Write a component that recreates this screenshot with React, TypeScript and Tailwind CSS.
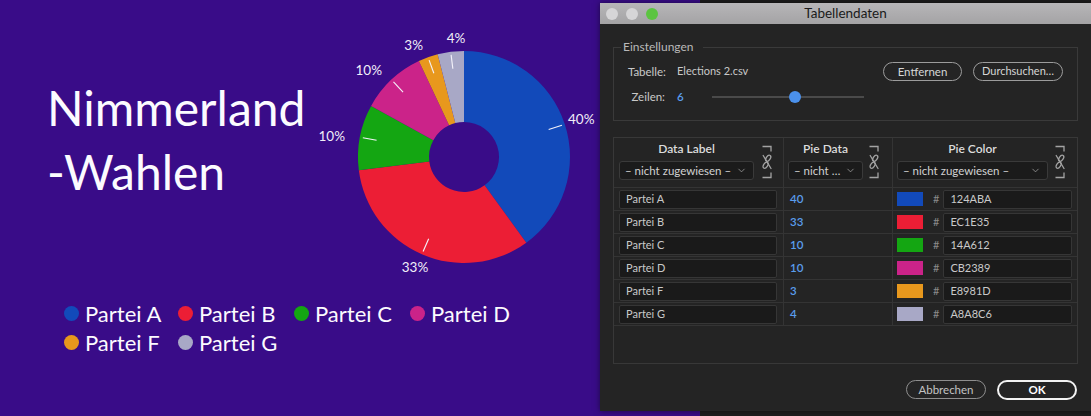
import React from 'react';
import { ChevronDown } from 'lucide-react';

const data = [
  { label: 'Partei A', value: 40, color: '#124ABA', hex: '124ABA' },
  { label: 'Partei B', value: 33, color: '#EC1E35', hex: 'EC1E35' },
  { label: 'Partei C', value: 10, color: '#14A612', hex: '14A612' },
  { label: 'Partei D', value: 10, color: '#CB2389', hex: 'CB2389' },
  { label: 'Partei F', value: 3, color: '#E8981D', hex: 'E8981D' },
  { label: 'Partei G', value: 4, color: '#A8A8C6', hex: 'A8A8C6' },
];

const labels = [
  { t: '40%', x: 568, y: 124, a: 'start' },
  { t: '33%', x: 415, y: 272, a: 'middle' },
  { t: '10%', x: 345, y: 141, a: 'end' },
  { t: '10%', x: 382, y: 75, a: 'end' },
  { t: '3%', x: 423, y: 50, a: 'end' },
  { t: '4%', x: 456, y: 43, a: 'middle' },
];

const CX = 464;
const CY = 157;
const R1 = 106;
const R0 = 35;

function pt(r: number, a: number): [number, number] {
  const rad = (a * Math.PI) / 180;
  return [CX + r * Math.sin(rad), CY - r * Math.cos(rad)];
}

function slicePath(a0: number, a1: number) {
  const large = a1 - a0 > 180 ? 1 : 0;
  const [x0, y0] = pt(R1, a0);
  const [x1, y1] = pt(R1, a1);
  const [x2, y2] = pt(R0, a1);
  const [x3, y3] = pt(R0, a0);
  return `M${x0} ${y0} A${R1} ${R1} 0 ${large} 1 ${x1} ${y1} L${x2} ${y2} A${R0} ${R0} 0 ${large} 0 ${x3} ${y3} Z`;
}

function Donut() {
  let acc = 0;
  const parts = data.map((d) => {
    const a0 = (acc / 100) * 360;
    acc += d.value;
    const a1 = (acc / 100) * 360;
    const mid = (a0 + a1) / 2;
    const [lx0, ly0] = pt(89, mid);
    const [lx1, ly1] = pt(103, mid);
    return { d, a0, a1, lx0, ly0, lx1, ly1 };
  });
  return (
    <svg className="mt-[20px] shrink-0" width={290} height={270} viewBox="310 20 290 270">
      {parts.map((p, i) => (
        <path key={i} d={slicePath(p.a0, p.a1)} fill={p.d.color} />
      ))}
      {parts.map((p, i) => (
        <line key={'l' + i} x1={p.lx0} y1={p.ly0} x2={p.lx1} y2={p.ly1} stroke="#f4f2fa" strokeWidth={1.1} />
      ))}
      {labels.map((l, i) => (
        <text
          key={'t' + i}
          x={l.x}
          y={l.y}
          textAnchor={l.a as 'start' | 'middle' | 'end'}
          fill="#f1eff8"
          fontSize={13.5}
          fontFamily="Lato, 'Open Sans', sans-serif"
        >
          {l.t}
        </text>
      ))}
    </svg>
  );
}

function LinkIcon() {
  return (
    <svg width={12} height={34} viewBox="0 0 12 34" className="shrink-0" fill="none" stroke="#a3a3a3" strokeWidth={1.3} strokeLinecap="round">
      <path d="M1.5 1.5 H10 V6.5" strokeLinecap="butt" />
      <path d="M1.5 32.5 H10 V27.5" strokeLinecap="butt" />
      <ellipse cx={7.2} cy={13.2} rx={2} ry={3.4} transform="rotate(35 7.2 13.2)" />
      <ellipse cx={4.6} cy={20.2} rx={2} ry={3.4} transform="rotate(35 4.6 20.2)" />
      <path d="M2.2 10.5 L10 23.5" />
    </svg>
  );
}

function Select({ text, w }: { text: string; w: string }) {
  return (
    <div className={`flex h-[19px] ${w} items-center justify-between rounded-[3px] border border-[#3a3a3a] bg-[#1b1b1b] pl-[5px] pr-[6px] text-[11.5px] text-[#d2d2d2]`}>
      <span className="whitespace-nowrap">{text}</span>
      <ChevronDown size={11} strokeWidth={1.6} color="#a9a9a9" />
    </div>
  );
}

function HeaderCell({
  title,
  select,
  selW,
  pl,
  gap,
  border,
}: {
  title: string;
  select: string;
  selW: string;
  pl: string;
  gap: string;
  border: boolean;
}) {
  return (
    <div className={`flex items-start ${pl} pt-[4px] pb-[7px] ${border ? 'border-r border-[#343434]' : ''}`}>
      <div className="flex flex-col">
        <div className="h-[14px] text-center text-[12px] leading-[14px] font-semibold text-[#dcdcdc]">{title}</div>
        <div className="mt-[5px]">
          <Select text={select} w={selW} />
        </div>
      </div>
      <div className={`mt-[3px] ${gap}`}>
        <LinkIcon />
      </div>
    </div>
  );
}

export default function App() {
  return (
    <div
      className="relative h-[416px] w-[1091px] overflow-hidden bg-[#390C88]"
      style={{ fontFamily: "Lato, 'Open Sans', sans-serif" }}
    >
      {/* Slide */}
      <div className="flex h-[416px] w-[600px] flex-col text-[#fcfbff]">
        <div className="flex">
          <h1 className="ml-[47px] mt-[76px] w-[263px] shrink-0 text-[48px] leading-[64px] font-normal">
            Nimmerland
            <br />
            -Wahlen
          </h1>
          <Donut />
        </div>
        <div className="ml-[64px] mt-[9px] grid grid-cols-[114px_116px_116px_auto] text-[22px] leading-[29px]">
          {data.map((d) => (
            <div key={d.label} className="flex items-center gap-[6px]">
              <span className="h-[15px] w-[15px] rounded-full" style={{ backgroundColor: d.color }} />
              <span>{d.label}</span>
            </div>
          ))}
        </div>
      </div>

      {/* Window behind */}
      <div className="absolute top-0 right-0 bottom-0 left-[700px] bg-[#1d1d1d]" />

      {/* Dialog */}
      <div className="absolute top-[3px] left-[600px] flex h-[408px] w-[491px] flex-col bg-[#242424] text-[11px] text-[#c9c9c9] shadow-[0_0_6px_rgba(0,0,0,0.5)]">
        {/* Title bar */}
        <div className="relative flex h-[21px] shrink-0 items-center gap-[8px] bg-linear-to-b from-[#b7b6b8] to-[#a4a3a5] pl-[6px]">
          <span className="h-[12px] w-[12px] rounded-full bg-[#d6d5d7]" />
          <span className="h-[12px] w-[12px] rounded-full bg-[#d6d5d7]" />
          <span className="h-[12px] w-[12px] rounded-full bg-[#5cc441]" />
          <div className="absolute inset-0 flex items-center justify-center text-[13.5px] text-[#1a1a1a]">
            Tabellendaten
          </div>
        </div>

        {/* Einstellungen */}
        <div className="relative mx-[13px] mt-[23px] flex h-[74px] flex-col gap-[6px] border border-[#3a3a3a] pt-[14px] pr-[14px] text-[11.5px]">
          <span className="absolute -top-[8px] left-[7px] bg-[#242424] pr-[9px] pl-[2px] text-[12px] leading-[14px] text-[#b9b9b9]">
            Einstellungen
          </span>
          <div className="flex h-[19px] items-center">
            <span className="w-[52px] text-right">Tabelle:</span>
            <span className="ml-[11px] text-[11px]">Elections 2.csv</span>
            <button className="ml-auto flex h-[19px] w-[79px] items-center justify-center rounded-full border-[1.5px] border-[#9c9c9c] text-[#d6d6d6]">
              Entfernen
            </button>
            <button className="ml-[11px] flex h-[19px] w-[90px] items-center justify-center rounded-full border-[1.5px] border-[#9c9c9c] text-[11px] text-[#d6d6d6]">
              Durchsuchen…
            </button>
          </div>
          <div className="flex h-[19px] items-center">
            <span className="w-[51px] text-right">Zeilen:</span>
            <span className="ml-[12px] w-[35px] font-semibold text-[#5a9ded]">6</span>
            <div className="relative h-[2px] w-[152px] bg-[#4a4a4a]">
              <span className="absolute top-[-5px] left-[77px] h-[12px] w-[12px] rounded-full bg-[#4b91ec]" />
            </div>
          </div>
        </div>

        {/* Table */}
        <div className="mx-[13px] mt-[16px] flex h-[227px] flex-col border border-[#383838]">
          <div className="grid grid-cols-[170px_109px_1fr] border-b border-[#343434]">
            <HeaderCell title="Data Label" select="– nicht zugewiesen –" selW="w-[135px]" pl="pl-[5px]" gap="ml-[7px]" border />
            <HeaderCell title="Pie Data" select="– nicht …" selW="w-[75px]" pl="pl-[4px]" gap="ml-[5px]" border />
            <HeaderCell title="Pie Color" select="– nicht zugewiesen –" selW="w-[151px]" pl="pl-[4px]" gap="ml-[6px]" border={false} />
          </div>
          {data.map((d) => (
            <div key={d.label} className="grid h-[23px] grid-cols-[170px_109px_1fr] border-b border-[#343434]">
              <div className="flex items-center border-r border-[#343434] pr-[6px] pl-[5px]">
                <div className="flex h-[19px] flex-1 items-center rounded-[2px] border border-[#363636] bg-[#1a1a1a] pl-[6px] text-[#c9c9c9]">
                  {d.label}
                </div>
              </div>
              <div className="flex items-center border-r border-[#343434] pl-[6px] text-[11.5px] font-semibold text-[#5a9ded]">
                {d.value}
              </div>
              <div className="flex items-center pr-[5px] pl-[4px]">
                <span className="h-[14px] w-[26px]" style={{ backgroundColor: d.color }} />
                <span className="ml-[10px] text-[#8a8a8a]">#</span>
                <div className="ml-[4px] flex h-[19px] flex-1 items-center rounded-[2px] border border-[#363636] bg-[#1a1a1a] pl-[6px] text-[#c9c9c9]">
                  {d.hex}
                </div>
              </div>
            </div>
          ))}
          <div className="flex-1" />
        </div>

        {/* Buttons */}
        <div className="mt-[16px] mr-[14px] flex justify-end gap-[11px] text-[11.5px]">
          <button className="flex h-[19px] w-[80px] items-center justify-center rounded-full border-[1.5px] border-[#8e8e8e] text-[#c3c3c3]">
            Abbrechen
          </button>
          <button className="flex h-[20px] w-[80px] items-center justify-center rounded-full border-2 border-[#f2f2f2] font-bold text-white">
            OK
          </button>
        </div>
      </div>
    </div>
  );
}
